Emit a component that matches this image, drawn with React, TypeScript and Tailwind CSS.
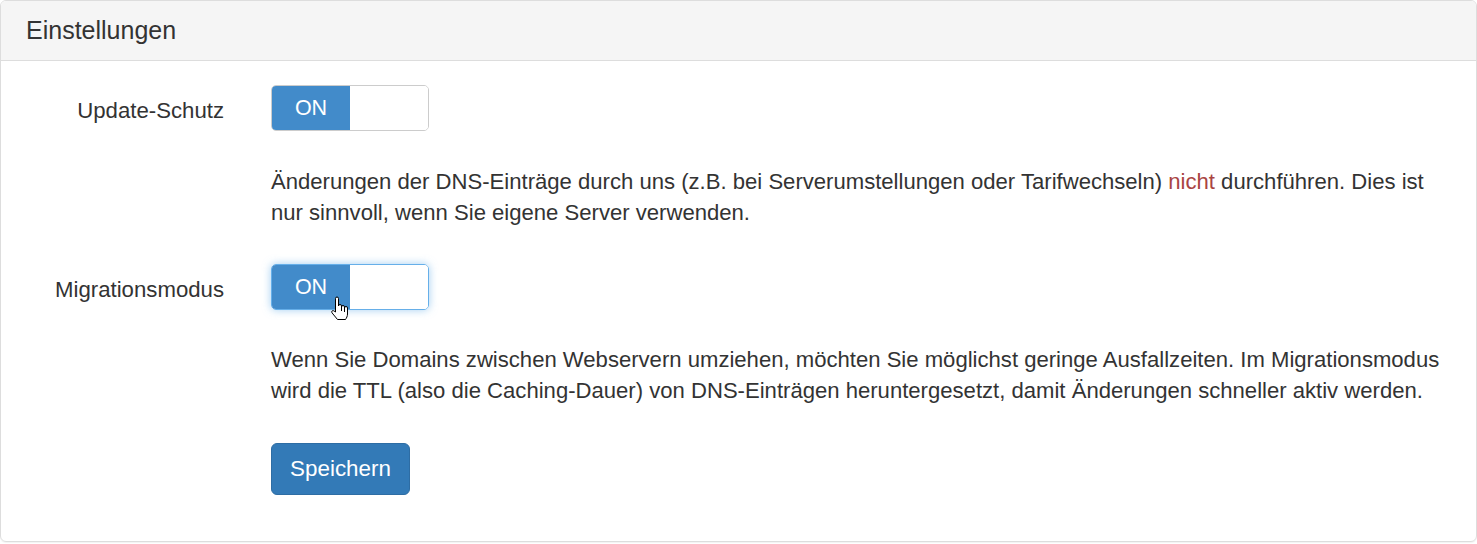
import React from "react";

type SwitchProps = { focused?: boolean; children?: React.ReactNode };

// bootstrap-switch look: blue ON half, empty white handle
const OnSwitch = ({ focused, children }: SwitchProps) => (
  <div
    className={
      focused
        ? "relative flex w-[158px] h-[46px] rounded-[5px] border border-[#66afe9] shadow-[inset_0_1px_1px_rgba(0,0,0,0.075),0_0_8px_rgba(102,175,233,0.6)]"
        : "relative flex w-[158px] h-[46px] rounded-[5px] border border-[#ccc]"
    }
  >
    <div className="w-[78px] h-full flex items-center justify-center bg-[#428bca] text-white text-[21.5px] rounded-l-[4px]">
      ON
    </div>
    <div className="flex-1 bg-white rounded-r-[4px]" />
    {children}
  </div>
);

// mouse pointer (hand) resting on the second switch
const HandCursor = () => (
  <svg
    className="absolute left-[58px] top-[31px]"
    width="19"
    height="25"
    viewBox="0 0 19 25"
  >
    <path
      d="M5.5 2.5a1.5 1.5 0 0 1 3 0V10a1.5 1.5 0 0 1 3 0v1a1.5 1.5 0 0 1 3 0v1a1.5 1.5 0 0 1 3 0v6c0 2.2-1 4-2 5.5H7.5L2 16.8c-.9-1.2.4-2.9 1.8-2L5.5 16Z"
      fill="#fff"
      stroke="#000"
      strokeWidth="1"
      strokeLinejoin="round"
    />
    <path d="M11.5 11v4M14.5 12v4" stroke="#000" strokeWidth="1" />
  </svg>
);

const App = () => {
  return (
    <div className="min-h-screen bg-white text-[#333] font-['Liberation_Sans',Arial,sans-serif] text-[22.1px]">
      <div className="rounded-[6px] border border-[#ddd] overflow-hidden shadow-[0_1px_1px_rgba(0,0,0,0.05)]">
        <div className="h-[60px] px-[25px] pt-[1px] flex items-center bg-[#f5f5f5] border-b border-[#ddd] text-[25px]">
          Einstellungen
        </div>

        <div className="grid grid-cols-[223px_1fr] gap-x-[47px] pt-[24px] pb-[46px] pr-[26px]">
          <div className="h-[46px] pt-[6px] flex items-center justify-end text-[22.2px]">Update-Schutz</div>
          <div>
            <OnSwitch />
          </div>

          <div />
          <p className="mt-[35px] leading-[31px]">
            Änderungen der DNS-Einträge durch uns (z.B. bei Serverumstellungen oder Tarifwechseln){" "}
            <span className="text-[#a94442]">nicht</span> durchführen. Dies ist nur sinnvoll, wenn Sie
            eigene Server verwenden.
          </p>

          <div className="mt-[36px] h-[46px] pt-[6px] flex items-center justify-end text-[22.2px]">
            Migrationsmodus
          </div>
          <div className="mt-[36px]">
            <OnSwitch focused>
              <HandCursor />
            </OnSwitch>
          </div>

          <div />
          <p className="mt-[34px] leading-[31px]">
            Wenn Sie Domains zwischen Webservern umziehen, möchten Sie möglichst geringe Ausfallzeiten. Im
            Migrationsmodus wird die TTL (also die Caching-Dauer) von DNS-Einträgen heruntergesetzt, damit
            Änderungen schneller aktiv werden.
          </p>

          <div />
          <div className="mt-[37px]">
            <button className="w-[139px] h-[52px] rounded-[6px] bg-[#337ab7] border border-[#2e6da4] text-white text-[22.4px]">
              Speichern
            </button>
          </div>
        </div>
      </div>
    </div>
  );
};

export default App;
